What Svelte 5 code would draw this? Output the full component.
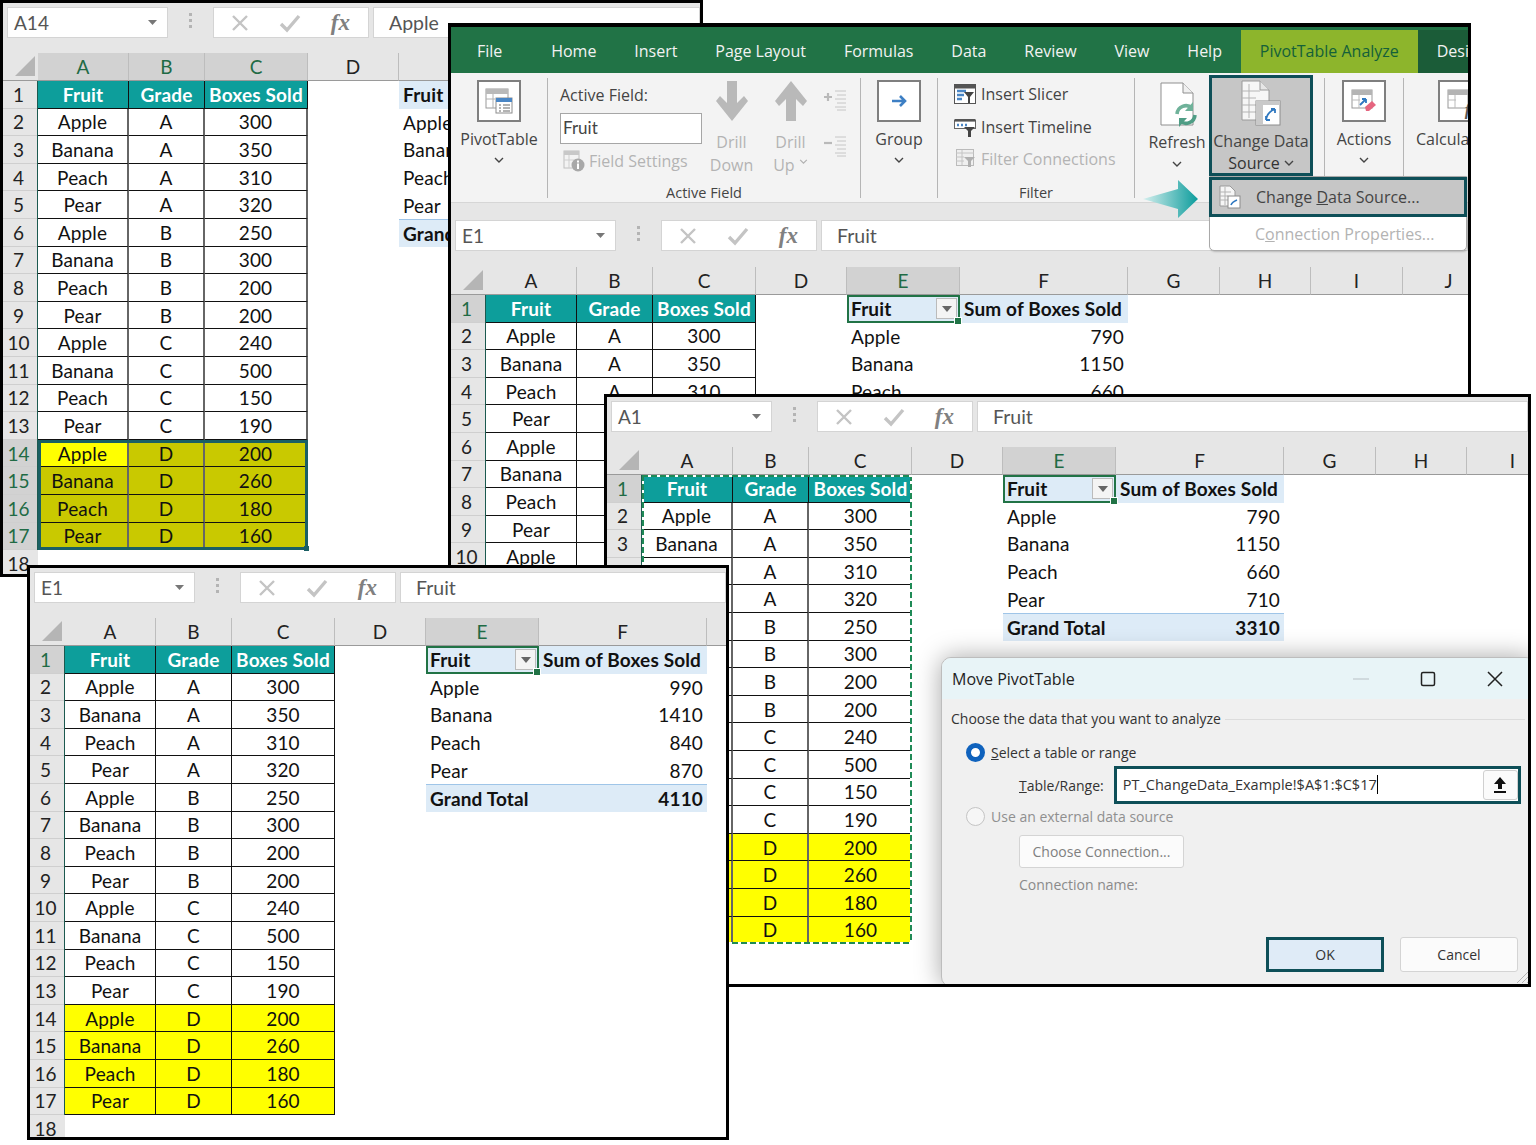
<script>
  const cols = ['A', 'B', 'C', 'D', 'E', 'F', 'G', 'H', 'I', 'J', 'K'];
  const tabs = ['File', 'Home', 'Insert', 'Page Layout', 'Formulas', 'Data', 'Review', 'View', 'Help'];
  const table = [
    ['Apple', 'A', 300], ['Banana', 'A', 350], ['Peach', 'A', 310], ['Pear', 'A', 320],
    ['Apple', 'B', 250], ['Banana', 'B', 300], ['Peach', 'B', 200], ['Pear', 'B', 200],
    ['Apple', 'C', 240], ['Banana', 'C', 500], ['Peach', 'C', 150], ['Pear', 'C', 190],
    ['Apple', 'D', 200], ['Banana', 'D', 260], ['Peach', 'D', 180], ['Pear', 'D', 160]
  ];
  const rowNums = Array.from({ length: 18 }, (_, i) => i + 1);
  const fruits = ['Apple', 'Banana', 'Peach', 'Pear'];
  const oldSums = [790, 1150, 660, 710];
  const newSums = [990, 1410, 840, 870];

  function fill(mode, r, c) {
    if (r < 14 || r > 17) return '';
    if (mode === 'yellow') return 'yellow';
    if (mode === 'olive') return r === 14 && c === 0 ? 'yellow' : 'olive';
    return '';
  }
</script>

{#snippet xmark()}
  <svg width="20" height="20" viewBox="0 0 20 20"><path d="M3 3l14 14M17 3L3 17" stroke="#c4c4c4" stroke-width="2.4" fill="none" /></svg>
{/snippet}

{#snippet checkmark()}
  <svg width="22" height="20" viewBox="0 0 22 20"><path d="M2 11l6 6L20 3" stroke="#c4c4c4" stroke-width="3.4" fill="none" /></svg>
{/snippet}

{#snippet chevron()}
  <svg class="chev" width="10" height="6" viewBox="0 0 10 6"><path d="M1 1l4 4 4-4" stroke="#444" stroke-width="1.4" fill="none" /></svg>
{/snippet}

{#snippet formulaBar(name, text, tall)}
  <div class="bar" class:tall>
    <div class="namebox">
      <span>{name}</span>
      <svg width="9" height="5" viewBox="0 0 9 5"><path d="M0 0h9L4.5 5z" fill="#777" /></svg>
    </div>
    <div class="dots"><i></i><i></i><i></i></div>
    <div class="fxbox">
      {@render xmark()}
      {@render checkmark()}
      <span class="fx">fx</span>
    </div>
    <div class="formula">{text}</div>
  </div>
{/snippet}

{#snippet sheet(cfg)}
  <div class="sheet" class:heavy={cfg.heavy} class:marching={cfg.ants}>
    <div class="grid">
      <div class="corner">
        <svg width="20" height="20" viewBox="0 0 20 20"><path d="M20 0v20H0z" fill="#b5b5b5" /></svg>
      </div>
      {#each cols as c}
        <div class="colhead" class:sel={cfg.selCols.includes(c)}>{c}</div>
      {/each}
      {#each rowNums as r}
        <div class="rowhead" class:sel={cfg.selRows.includes(r)}>{r}</div>
        {#if r === 1}
          <div class="cell head first">Fruit</div>
          <div class="cell head">Grade</div>
          <div class="cell head last">Boxes Sold</div>
        {:else if r <= 17}
          {#each table[r - 2] as value, c}
            <div class="cell body {fill(cfg.fill, r, c)}" class:first={c === 0} class:last={c === 2}>{value}</div>
          {/each}
        {:else}
          <div></div><div></div><div></div>
        {/if}
        <div></div>
        {#if r === 1}
          <div class="cell pv pvhead">
            <span>Fruit</span>
            {#if cfg.dropdown}
              <span class="drop"><svg width="10" height="6" viewBox="0 0 10 6"><path d="M0 0h10L5 6z" fill="#666" /></svg></span>
            {/if}
          </div>
          <div class="cell pv pvhead">Sum of Boxes Sold</div>
        {:else if r <= 5}
          <div class="cell pv">{fruits[r - 2]}</div>
          <div class="cell pv num">{cfg.sums[r - 2]}</div>
        {:else if r === 6}
          <div class="cell pv pvhead total">Grand Total</div>
          <div class="cell pv pvhead total num">{cfg.sums.reduce((a, b) => a + b, 0)}</div>
        {:else}
          <div></div><div></div>
        {/if}
        <div></div><div></div><div></div><div></div><div></div>
      {/each}
    </div>
    <div class="grid frames">
      {#if cfg.dropdown}
        <div class="active"></div>
      {/if}
      {#if cfg.fill === 'olive'}
        <div class="range"></div>
      {/if}
      {#if cfg.ants}
        <div class="ants"></div>
      {/if}
    </div>
  </div>
{/snippet}

<div class="page">
  <div class="win win1">
    {@render formulaBar('A14', 'Apple', false)}
    {@render sheet({ selCols: ['A', 'B', 'C'], selRows: [14, 15, 16, 17], fill: 'olive', sums: oldSums, heavy: true })}
  </div>

  <div class="win win2">
    <div class="tabs">
      {#each tabs as t}
        <span class="tab">{t}</span>
      {/each}
      <span class="tab analyze">PivotTable Analyze</span>
      <span class="tab design">Design</span>
    </div>
    <div class="ribbon">
      <div class="group g1">
        <div class="cmd">
          <div class="iconbox">
            <svg width="30" height="30" viewBox="0 0 30 30">
              <rect x="2" y="3" width="22" height="19" fill="#fff" stroke="#9a9a9a" />
              <rect x="2" y="3" width="22" height="5" fill="#b9b9b9" />
              <path d="M9 8v14M2 13h9" stroke="#b0b0b0" />
              <rect x="12" y="12" width="16" height="15" fill="#fff" stroke="#8c8c8c" />
              <rect x="12" y="12" width="16" height="4" fill="#4a86c5" />
              <path d="M15 19h2M19 19h7M15 22h2M19 22h7M15 25h2M19 25h7" stroke="#666" />
            </svg>
          </div>
          <span>PivotTable</span>
          {@render chevron()}
        </div>
      </div>

      <div class="group g2">
        <div class="fieldrow">
          <div class="fieldcol">
            <span class="fieldlabel">Active Field:</span>
            <div class="fieldinput">Fruit</div>
            <div class="settings">
              <svg width="22" height="22" viewBox="0 0 22 22">
                <rect x="1" y="1" width="15" height="17" fill="#f3f3f3" stroke="#c0c0c0" />
                <rect x="1" y="1" width="15" height="4" fill="#c8c8c8" />
                <path d="M6 5v13M1 10h15" stroke="#cfcfcf" />
                <circle cx="15" cy="15" r="6.5" fill="#a8a8a8" />
                <rect x="14" y="13.5" width="2" height="5.5" fill="#fff" />
                <rect x="14" y="10.5" width="2" height="2" fill="#fff" />
              </svg>
              <span>Field Settings</span>
            </div>
          </div>
          <div class="drill">
            <svg width="32" height="40" viewBox="0 0 32 40"><path d="M11 0h10v22l7-7 4 5-16 20L0 20l4-5 7 7z" fill="#b9b9b9" /></svg>
            <span>Drill</span>
            <span>Down</span>
          </div>
          <div class="drill">
            <svg width="32" height="40" viewBox="0 0 32 40"><path d="M11 40h10V18l7 7 4-5L16 0 0 20l4 5 7-7z" fill="#b9b9b9" /></svg>
            <span>Drill</span>
            <span>Up <svg class="upchev" width="9" height="5" viewBox="0 0 10 6"><path d="M1 1l4 4 4-4" stroke="#b0b0b0" stroke-width="1.4" fill="none" /></svg></span>
          </div>
          <div class="plusminus">
            <svg width="24" height="22" viewBox="0 0 24 22">
              <path d="M0 7h8M4 3v8" stroke="#b9b9b9" stroke-width="2.2" />
              <path d="M11 1h11M13 5h9M11 9h11M13 13h9M11 17h11M13 20h9" stroke="#c6c6c6" />
            </svg>
            <svg width="24" height="22" viewBox="0 0 24 22">
              <path d="M0 7h8" stroke="#b9b9b9" stroke-width="2.2" />
              <path d="M11 1h11M13 5h9M11 9h11M13 13h9M11 17h11M13 20h9" stroke="#c6c6c6" />
            </svg>
          </div>
        </div>
        <div class="grouplabel">Active Field</div>
      </div>

      <div class="group g3">
        <div class="cmd">
          <div class="iconbox">
            <svg width="17" height="14" viewBox="0 0 17 14"><path d="M1 7h13M9 2l5 5-5 5" stroke="#3d7fc4" stroke-width="2.6" fill="none" /></svg>
          </div>
          <span>Group</span>
          {@render chevron()}
        </div>
      </div>

      <div class="group g4">
        <div class="filterlist">
          <div class="filteritem">
            <svg width="22" height="22" viewBox="0 0 22 22">
              <rect x="0.5" y="1.5" width="21" height="19" fill="#fff" stroke="#555" />
              <rect x="0.5" y="1.5" width="21" height="4" fill="#555" />
              <path d="M3 8h9M3 12h7M3 16h5" stroke="#4a86c5" stroke-width="2.4" />
              <path d="M10 9h10l-4 5v6h-2v-6z" fill="#444" />
            </svg>
            <span>Insert Slicer</span>
          </div>
          <div class="filteritem">
            <svg width="22" height="22" viewBox="0 0 22 22">
              <rect x="0.5" y="4.5" width="21" height="8" fill="#fff" stroke="#666" />
              <rect x="0.5" y="3" width="21" height="2.6" fill="#555" />
              <path d="M3 9h2M7 9h2M11 9h2" stroke="#4a86c5" stroke-width="2.4" />
              <path d="M10 11h11l-4 4v6h-3v-6z" fill="#444" />
            </svg>
            <span>Insert Timeline</span>
          </div>
          <div class="filteritem off">
            <svg width="22" height="22" viewBox="0 0 22 22">
              <rect x="2.5" y="1.5" width="17" height="16" fill="#efefef" stroke="#bbb" />
              <path d="M2 5h18M8 2v15M2 9h8M2 13h8" stroke="#c4c4c4" />
              <path d="M10 9h11l-4 4v6h-3v-6z" fill="#b0b0b0" />
            </svg>
            <span>Filter Connections</span>
          </div>
        </div>
        <div class="grouplabel">Filter</div>
      </div>

      <div class="group g5">
        <div class="refresh">
          <svg width="40" height="46" viewBox="0 0 40 46">
            <path d="M1 1h22l10 10v32H1z" fill="#fff" stroke="#8f8f8f" />
            <path d="M23 1v10h10" fill="#f0f0f0" stroke="#8f8f8f" />
            <path d="M17 32a9 9 0 0 1 15-6" stroke="#6fb29a" stroke-width="3.6" fill="none" />
            <path d="M33 20v9h-8z" fill="#6fb29a" />
            <path d="M35 33a9 9 0 0 1-15 6" stroke="#4f9d85" stroke-width="3.6" fill="none" />
            <path d="M19 45v-9h8z" fill="#4f9d85" />
          </svg>
          <span>Refresh</span>
          {@render chevron()}
        </div>
        <div class="changedata">
          <svg width="40" height="46" viewBox="0 0 40 46">
            <path d="M1 1h18l9 9v30H1z" fill="#f6f6f6" stroke="#9a9a9a" />
            <path d="M19 1v9h9" fill="#e6e6e6" stroke="#9a9a9a" />
            <path d="M1 11h18M1 18h14M1 25h14M1 32h14M8 4v34" stroke="#b4b4b4" />
            <rect x="15" y="21" width="24" height="24" fill="#fff" stroke="#8c8c8c" />
            <path d="M15 21h24v4H22v20h-7z" fill="#c9c9c9" />
            <path d="M25 40q1-8 9-11M34 29h-4M34 29v4M25 40h4M25 40v-4" stroke="#2f78c0" stroke-width="1.8" fill="none" />
          </svg>
          <span class="cd1">Change Data</span>
          <span class="cd2">Source {@render chevron()}</span>
        </div>
      </div>

      <div class="group g6">
        <div class="cmd">
          <div class="iconbox">
            <svg width="28" height="28" viewBox="0 0 28 28">
              <rect x="2" y="3" width="20" height="18" fill="#fff" stroke="#999" />
              <rect x="2" y="3" width="20" height="5" fill="#b4b4b4" />
              <path d="M9 8v13M2 13h8" stroke="#bbb" />
              <path d="M10 18l6-6M16 12h-4M16 12v4" stroke="#2f78c0" stroke-width="1.8" fill="none" />
              <path d="M15 20l7-6 4 4-7 6h-3z" fill="#e5657f" />
            </svg>
          </div>
          <span>Actions</span>
          {@render chevron()}
        </div>
      </div>

      <div class="group g7">
        <div class="cmd">
          <div class="iconbox">
            <svg width="28" height="28" viewBox="0 0 28 28">
              <rect x="2" y="3" width="20" height="18" fill="#fff" stroke="#999" />
              <rect x="2" y="3" width="20" height="5" fill="#b4b4b4" />
              <path d="M9 8v13M2 13h8" stroke="#bbb" />
            </svg>
            <span class="fx small">fx</span>
          </div>
          <span class="calc">Calculations</span>
          {@render chevron()}
        </div>
      </div>
    </div>

    {@render formulaBar('E1', 'Fruit', true)}
    {@render sheet({ selCols: ['E'], selRows: [1], fill: '', sums: oldSums, dropdown: true })}

    <svg class="pointer" width="56" height="38" viewBox="0 0 56 38">
      <defs>
        <linearGradient id="pointerfade" x1="0" x2="1" y1="0" y2="0">
          <stop offset="0" stop-color="#d5efee" />
          <stop offset="1" stop-color="#0c9c9c" />
        </linearGradient>
      </defs>
      <path d="M0 19L35 9V0l20 19-20 19V29z" fill="url(#pointerfade)" />
    </svg>

    <div class="menu">
      <div class="menuitem hot">
        <svg width="22" height="24" viewBox="0 0 22 24">
          <path d="M1 1h10l5 5v15H1z" fill="#f6f6f6" stroke="#9a9a9a" />
          <path d="M1 7h11M1 11h8M1 15h8M6 2v18" stroke="#b4b4b4" />
          <rect x="9" y="11" width="12" height="12" fill="#fff" stroke="#8c8c8c" />
          <path d="M12 20q1-3 6-5" stroke="#2f78c0" stroke-width="1.6" fill="none" />
        </svg>
        <span>Change <u>D</u>ata Source...</span>
      </div>
      <div class="menuitem off">
        <span>C<u>o</u>nnection Properties...</span>
      </div>
    </div>
  </div>

  <div class="win win3">
    {@render formulaBar('A1', 'Fruit', false)}
    {@render sheet({ selCols: ['E'], selRows: [1], fill: 'yellow', sums: oldSums, dropdown: true, ants: true, heavy: true })}

    <div class="dialog">
      <div class="dlgtitle">
        <span>Move PivotTable</span>
        <div class="dlgctrls">
          <svg width="16" height="16" viewBox="0 0 16 16"><path d="M0 8h16" stroke="#c8d2d6" stroke-width="1.4" /></svg>
          <svg width="16" height="16" viewBox="0 0 16 16"><rect x="1.5" y="1.5" width="13" height="13" rx="1.5" fill="none" stroke="#222" stroke-width="1.5" /></svg>
          <svg width="16" height="16" viewBox="0 0 16 16"><path d="M1 1l14 14M15 1L1 15" stroke="#222" stroke-width="1.5" /></svg>
        </div>
      </div>
      <div class="dlgbody">
        <div class="legend"><span>Choose the data that you want to analyze</span><i></i></div>
        <div class="radiorow">
          <span class="radio on"></span>
          <span><u>S</u>elect a table or range</span>
        </div>
        <div class="rangerow">
          <span><u>T</u>able/Range:</span>
          <div class="rangeinput">
            <div class="rangetext"><span>PT_ChangeData_Example!$A$1:$C$17</span></div>
            <span class="collapse">
              <svg width="14" height="16" viewBox="0 0 14 16"><path d="M7 0l6 7H9v5H5V7H1zM1 14h12v2H1z" fill="#111" /></svg>
            </span>
          </div>
        </div>
        <div class="radiorow off">
          <span class="radio"></span>
          <span>Use an external data source</span>
        </div>
        <div class="choose">Choose Connection...</div>
        <div class="connname">Connection name:</div>
        <div class="dlgbtns">
          <div class="btn ok">OK</div>
          <div class="btn">Cancel</div>
        </div>
      </div>
      <svg class="grip" width="14" height="14" viewBox="0 0 14 14"><path d="M14 0L0 14M14 5l-9 9M14 10l-4 4" stroke="#b5b5b5" /></svg>
    </div>
  </div>

  <div class="win win4">
    {@render formulaBar('E1', 'Fruit', false)}
    {@render sheet({ selCols: ['E'], selRows: [1], fill: 'yellow', sums: newSums, dropdown: true })}
  </div>
</div>

<style>
  :global(body) {
    background: #fff;
  }
  .page {
    position: relative;
    width: 1536px;
    height: 1145px;
    overflow: hidden;
    font-family: Lato, "Open Sans", sans-serif;
    color: #111;
  }

  /* windows pile up like a desktop */
  .win {
    position: absolute;
    box-sizing: border-box;
    border: 3px solid #000;
    background: #fff;
    overflow: hidden;
  }
  .win1 { left: 0; top: 0; width: 703px; height: 577px; }
  .win2 { left: 448px; top: 23px; width: 1023px; height: 547px; border-top-width: 4px; }
  .win3 { left: 604px; top: 394px; width: 927px; height: 593px; }
  .win4 { left: 27px; top: 565px; width: 702px; height: 575px; }

  .bar {
    display: flex;
    align-items: flex-start;
    box-sizing: border-box;
    height: 50px;
    padding: 4px 0 0 4px;
    background: #e6e6e6;
    font-size: 19px;
    color: #555;
  }
  .bar.tall {
    height: 64px;
    padding-top: 17px;
  }
  .namebox {
    display: flex;
    align-items: center;
    justify-content: space-between;
    box-sizing: border-box;
    width: 161px;
    height: 31px;
    padding: 0 10px 0 6px;
    background: #fff;
    border: 1px solid #d4d4d4;
  }
  .dots {
    display: flex;
    flex-direction: column;
    align-items: center;
    gap: 3px;
    width: 45px;
    padding-top: 6px;
  }
  .dots i {
    width: 3px;
    height: 3px;
    background: #b4b4b4;
  }
  .fxbox {
    display: flex;
    align-items: center;
    justify-content: space-between;
    box-sizing: border-box;
    width: 156px;
    height: 31px;
    padding: 0 18px 0 16px;
    background: #fff;
    border: 1px solid #d4d4d4;
  }
  .fx {
    font-family: "Liberation Serif", serif;
    font-style: italic;
    font-weight: bold;
    font-size: 23px;
    color: #808080;
  }
  .formula {
    flex: 1;
    box-sizing: border-box;
    height: 31px;
    margin-left: 4px;
    padding: 3px 0 0 15px;
    background: #fff;
    border: 1px solid #d4d4d4;
    font-size: 19.5px;
  }

  /* cells and selection frames are two grids stacked in one area */
  .sheet {
    --vline: 1px solid #111;
    display: grid;
  }
  .sheet.heavy {
    --vline: 2px solid #666;
  }
  .grid {
    grid-area: 1 / 1;
    display: grid;
    grid-template-columns: 35px 91px 76px 103px 91px 113px 168px 92px 91px 92px 92px 92px;
    grid-template-rows: 28px repeat(18, 27.6px);
    font-size: 19px;
  }
  .frames {
    pointer-events: none;
  }
  .corner {
    display: flex;
    align-items: flex-end;
    justify-content: flex-end;
    padding: 0 3px 4px 0;
    background: #e6e6e6;
    border-bottom: 1px solid #9a9a9a;
  }
  .colhead {
    display: flex;
    align-items: center;
    justify-content: center;
    background: #e6e6e6;
    border-right: 1px solid #bdbdbd;
    border-bottom: 1px solid #9a9a9a;
    color: #222;
  }
  .colhead.sel {
    background: #d2d2d2;
    color: #1f6b45;
  }
  .rowhead {
    display: flex;
    align-items: center;
    justify-content: center;
    padding-right: 4px;
    background: #e6e6e6;
    border-bottom: 1px solid #cfcfcf;
    color: #222;
  }
  .rowhead.sel {
    background: #d2d2d2;
    color: #1f6b45;
  }
  .cell {
    display: flex;
    align-items: center;
    justify-content: center;
    box-sizing: border-box;
    white-space: nowrap;
    overflow: hidden;
    letter-spacing: 0.15px;
  }
  .cell.first {
    box-shadow: -1px 0 0 #1c5a50;
  }
  .head {
    background: #0d9e9b;
    color: #fff;
    font-weight: bold;
    border-right: 1px solid #111;
    border-bottom: 1px solid #111;
  }
  .body {
    border-right: var(--vline);
    border-bottom: 1px solid #111;
  }
  .body.yellow { background: #ffff00; }
  .body.olive { background: #c9c900; }
  .marching .last {
    border-right: none;
  }

  .pv {
    justify-content: flex-start;
    padding: 0 4px;
  }
  .pv.num {
    justify-content: flex-end;
  }
  .pvhead {
    background: #ddebf7;
    font-weight: bold;
  }
  .pvhead.total {
    border-top: 1px solid #9fc5e8;
  }
  .drop {
    display: flex;
    align-items: center;
    justify-content: center;
    width: 21px;
    height: 21px;
    margin-left: auto;
    margin-right: -1px;
    background: #f4f4f4;
    border: 1px solid #bbb;
    box-sizing: border-box;
  }

  .active {
    position: relative;
    grid-column: 6;
    grid-row: 2;
    border: 2px solid #217346;
  }
  .active::after {
    content: "";
    position: absolute;
    right: -4px;
    bottom: -4px;
    width: 6px;
    height: 6px;
    background: #217346;
    border: 1px solid #fff;
  }
  .range {
    position: relative;
    grid-column: 2 / 5;
    grid-row: 15 / 19;
    border: 3px solid #1a5f64;
  }
  .range::after {
    content: "";
    position: absolute;
    right: -4px;
    bottom: -4px;
    width: 5px;
    height: 5px;
    background: #1a5f64;
  }
  .ants {
    grid-column: 2 / 5;
    grid-row: 2 / 19;
    --dash: #1f8a56 0 6px, #fff 6px 9px;
    background:
      repeating-linear-gradient(90deg, var(--dash)) top / 100% 2px no-repeat,
      repeating-linear-gradient(90deg, var(--dash)) bottom / 100% 2px no-repeat,
      repeating-linear-gradient(180deg, var(--dash)) left / 2px 100% no-repeat,
      repeating-linear-gradient(180deg, var(--dash)) right / 2px 100% no-repeat;
  }

  /* ribbon */
  .tabs {
    display: flex;
    align-items: flex-end;
    height: 46px;
    padding-left: 7px;
    background: #217346;
    color: #fff;
    font-family: "Open Sans", sans-serif;
    font-size: 16px;
    white-space: nowrap;
    overflow: hidden;
  }
  .tab {
    display: flex;
    align-items: center;
    box-sizing: border-box;
    height: 43px;
    padding: 0 18.95px 2px;
    color: #f2f2f2;
  }
  .tab:first-child {
    margin-right: 11px;
  }
  .analyze {
    background: #8db52c;
    color: #14603a;
  }
  .design {
    flex: 1;
    background: #1b5c38;
  }
  .ribbon {
    display: flex;
    box-sizing: border-box;
    height: 130px;
    padding-top: 5px;
    background: #f3f3f3;
    border-bottom: 1px solid #d6d6d6;
    font-family: "Open Sans", sans-serif;
    font-size: 16px;
    color: #444;
  }
  .group {
    position: relative;
    display: flex;
    flex-direction: column;
    box-sizing: border-box;
    height: 120px;
    border-right: 1px solid #b5b5b5;
    white-space: nowrap;
  }
  .g1 { width: 97px; }
  .g2 { width: 313px; }
  .g3 { width: 77px; }
  .g4 { width: 197px; }
  .g5 { width: 190px; }
  .g6 { width: 79px; }
  .g7 { flex: 1; border-right: none; overflow: hidden; }

  .cmd {
    display: flex;
    flex-direction: column;
    align-items: center;
    gap: 7px;
    padding-top: 2px;
  }
  .cmd span {
    line-height: 21px;
  }
  .iconbox {
    display: flex;
    align-items: center;
    justify-content: center;
    box-sizing: border-box;
    width: 44px;
    height: 42px;
    background: #fff;
    border: 2px solid #7f7f7f;
  }
  .chev {
    display: block;
  }
  .g7 .cmd {
    align-items: flex-start;
    padding-left: 12px;
  }
  .g7 .iconbox {
    margin-left: 22px;
    position: relative;
  }
  .g7 .chev {
    margin-left: 52px;
  }
  .fx.small {
    position: absolute;
    right: 1px;
    bottom: 0;
    font-size: 17px;
    color: #555;
  }

  .fieldrow {
    display: flex;
    flex: 1;
    padding-left: 12px;
  }
  .fieldcol {
    display: flex;
    flex-direction: column;
    width: 142px;
  }
  .fieldlabel {
    line-height: 22px;
    padding-top: 6px;
  }
  .fieldinput {
    box-sizing: border-box;
    height: 31px;
    margin-top: 7px;
    padding: 3px 2px;
    background: #fff;
    border: 1px solid #a6a6a6;
    font-family: Lato, sans-serif;
    font-size: 17px;
  }
  .settings {
    display: flex;
    align-items: center;
    gap: 4px;
    margin-top: 6px;
    padding-left: 3px;
    color: #b3b3b3;
  }
  .drill {
    display: flex;
    flex-direction: column;
    align-items: center;
    width: 59px;
    padding-top: 3px;
    color: #b3b3b3;
    line-height: 23px;
  }
  .drill svg:first-child {
    margin-bottom: 10px;
  }
  .upchev {
    vertical-align: middle;
  }
  .plusminus {
    display: flex;
    flex-direction: column;
    gap: 24px;
    padding: 12px 0 0 4px;
  }
  .grouplabel {
    margin-top: auto;
    margin-bottom: -7px;
    padding-bottom: 2px;
    text-align: center;
    font-size: 14.5px;
    line-height: 20px;
  }

  .filterlist {
    display: flex;
    flex-direction: column;
    gap: 10.5px;
    padding: 5px 0 0 16px;
  }
  .filteritem {
    display: flex;
    align-items: center;
    gap: 5px;
    height: 22px;
  }
  .filteritem.off {
    color: #b3b3b3;
  }

  .g5 {
    flex-direction: row;
    overflow: visible;
  }
  .refresh {
    display: flex;
    flex-direction: column;
    align-items: center;
    box-sizing: border-box;
    width: 73px;
    padding: 4px 0 0 11px;
  }
  .refresh svg:first-child {
    margin-left: 6px;
  }
  .refresh span {
    margin-top: 1px;
    line-height: 26px;
    font-size: 16px;
  }
  .refresh .chev {
    margin-top: 6px;
  }
  .changedata {
    display: flex;
    flex-direction: column;
    align-items: center;
    box-sizing: border-box;
    width: 104px;
    height: 101px;
    margin: -3px 0 0 1px;
    padding-top: 2px;
    background: #c6c6c6;
    border: 3px solid #0e4f58;
    font-size: 16px;
    white-space: nowrap;
  }
  .changedata > svg {
    flex-shrink: 0;
  }
  .cd1 {
    line-height: 22px;
    margin-top: 4px;
  }
  .cd2 {
    display: flex;
    align-items: center;
    gap: 4px;
    line-height: 22px;
    color: #333;
  }

  .pointer {
    position: absolute;
    left: 692px;
    top: 153px;
  }
  .menu {
    position: absolute;
    left: 758px;
    top: 149px;
    box-sizing: border-box;
    width: 258px;
    height: 75px;
    background: #fff;
    border: 1px solid #a9a9a9;
    border-radius: 0 0 5px 5px;
    font-family: "Open Sans", sans-serif;
    font-size: 16px;
    box-shadow: 1px 1px 2px rgba(0, 0, 0, 0.2);
  }
  .menuitem {
    display: flex;
    align-items: center;
    box-sizing: border-box;
    height: 34px;
    padding-left: 45px;
    color: #444;
  }
  .menuitem.hot {
    height: 40px;
    margin: 0 -1px 0 -1px;
    padding-left: 7px;
    gap: 15px;
    background: #c6c6c6;
    border: 3px solid #0e4f58;
  }
  .menuitem.off {
    color: #b3b3b3;
  }

  /* dialog */
  .dialog {
    position: absolute;
    left: 334px;
    top: 260px;
    box-sizing: border-box;
    width: 594px;
    height: 330px;
    background: #f0f0f0;
    border: 1px solid #bdbdbd;
    border-radius: 10px;
    overflow: hidden;
    font-family: "Open Sans", sans-serif;
    font-size: 14px;
    color: #333;
    box-shadow: 0 0 26px rgba(0, 0, 0, 0.35);
  }
  .dlgtitle {
    display: flex;
    align-items: center;
    justify-content: space-between;
    height: 41px;
    padding: 0 0 0 10px;
    background: #e8f4f7;
    font-size: 16px;
    color: #222;
  }
  .dlgctrls {
    display: flex;
    gap: 51px;
    padding-right: 31px;
  }
  .dlgbody {
    padding: 10px 0 0 9px;
  }
  .legend {
    display: flex;
    align-items: center;
    gap: 4px;
    padding-right: 9px;
    line-height: 20px;
  }
  .legend i {
    flex: 1;
    height: 1px;
    background: #dcdcdc;
  }
  .radiorow {
    display: flex;
    align-items: center;
    gap: 6px;
    height: 22px;
    margin-top: 12px;
    padding-left: 15px;
  }
  .radiorow.off {
    margin-top: 1px;
    color: #8f8f8f;
  }
  .radio {
    box-sizing: border-box;
    width: 19px;
    height: 19px;
    background: #f6f6f6;
    border: 1px solid #c4c4c4;
    border-radius: 50%;
  }
  .radio.on {
    background: #fff;
    border: 5px solid #0f62bd;
  }
  .rangerow {
    display: flex;
    align-items: center;
    height: 38px;
    margin-top: 3px;
    padding-left: 68px;
    gap: 10px;
  }
  .rangeinput {
    display: flex;
    align-items: center;
    box-sizing: border-box;
    width: 407px;
    height: 38px;
    padding: 0 0 2px 6px;
    background: #fff;
    border: 3px solid #0e4f58;
  }
  .rangetext {
    flex: 1;
    white-space: nowrap;
    font-size: 14.5px;
  }
  .rangetext span {
    border-right: 1px solid #000;
  }
  .collapse {
    display: flex;
    align-items: center;
    justify-content: center;
    width: 33px;
    height: 28px;
    margin-top: 2px;
    background: #fbfbfb;
    border: 1px solid #d0d0d0;
    border-radius: 3px;
  }
  .choose {
    display: flex;
    align-items: center;
    justify-content: center;
    box-sizing: border-box;
    width: 165px;
    height: 33px;
    margin: 8px 0 0 68px;
    background: #fbfbfb;
    border: 1px solid #d4d4d4;
    border-radius: 3px;
    color: #808080;
  }
  .connname {
    margin: 7px 0 0 68px;
    line-height: 20px;
    color: #8a8a8a;
  }
  .dlgbtns {
    display: flex;
    gap: 16px;
    margin: 42px 0 0 315px;
  }
  .btn {
    display: flex;
    align-items: center;
    justify-content: center;
    box-sizing: border-box;
    width: 118px;
    height: 35px;
    background: #fbfbfb;
    border: 1px solid #d4d4d4;
    border-radius: 3px;
  }
  .btn.ok {
    background: #dfebf7;
    border: 3px solid #0e4f58;
    border-radius: 0;
  }
  .grip {
    position: absolute;
    right: 3px;
    bottom: 3px;
  }
</style>
